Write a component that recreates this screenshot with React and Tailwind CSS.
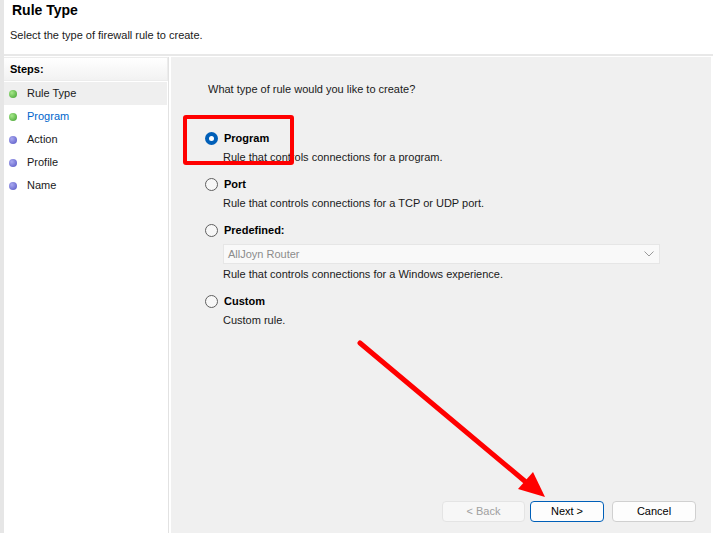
import React from 'react';

const font = { fontFamily: '"Liberation Sans", Arial, sans-serif' };

// wizard steps on the left
const steps = [
  { label: 'Rule Type', done: true, active: true },
  { label: 'Program', done: true, link: true },
  { label: 'Action' },
  { label: 'Profile' },
  { label: 'Name' },
];

function Bullet({ done }) {
  return done ? (
    <span className="w-[8px] h-[8px] rounded-full bg-[radial-gradient(circle_at_35%_35%,#a6e88a,#3e9e2c)]" />
  ) : (
    <span className="w-[8px] h-[8px] rounded-full bg-[radial-gradient(circle_at_35%_35%,#a9a9f0,#5555c4)]" />
  );
}

function Radio({ checked }) {
  if (checked) {
    return (
      <span className="w-[13px] h-[13px] rounded-full bg-[#005fb8] flex items-center justify-center shrink-0">
        <span className="w-[5px] h-[5px] rounded-full bg-white" />
      </span>
    );
  }
  return <span className="w-[13px] h-[13px] rounded-full border border-[#5f5f5f] bg-[#f7f7f7] shrink-0" />;
}

function Option({ checked, label, desc, children }) {
  return (
    <div className="flex flex-col">
      <div className="flex items-center h-[18px] gap-[6px]">
        <Radio checked={checked} />
        <span className="font-bold text-[11px] text-black">{label}</span>
      </div>
      {children}
      <div className="h-[18px] mt-[1px] leading-[18px] text-[11px] text-[#1a1a1a] pl-[18px]">{desc}</div>
    </div>
  );
}

function Button({ children, primary, disabled }) {
  return (
    <button
      className={
        'w-full h-[21px] rounded-[4px] text-[11px] flex items-center justify-center ' +
        (disabled
          ? 'border border-[#e4e4e4] bg-[#f7f7f7] text-[#a0a0a0]'
          : primary
          ? 'border border-[#005fb8] bg-[#fdfdfd] text-black'
          : 'border border-[#d0d0d0] bg-[#fdfdfd] text-black')
      }
    >
      {children}
    </button>
  );
}

export default function App() {
  return (
    <div className="w-[713px] h-[533px] bg-white relative overflow-hidden flex flex-col border-l-[4px] border-l-[#e6e6e6]" style={font}>
      {/* header */}
      <div className="h-[54px] shrink-0 pl-[8px] pt-[1px]">
        <div className="text-[14px] font-bold text-black leading-[18px]">Rule Type</div>
        <div className="text-[11px] text-[#1a1a1a] mt-[8px] ml-[-2px]">Select the type of firewall rule to create.</div>
      </div>
      <div className="h-[2px] bg-[#e8e8e8] shrink-0" />

      <div className="flex flex-1 min-h-0 pt-[1px]">
        {/* steps */}
        <div className="w-[165px] shrink-0 border-r border-r-[#e2e2e2] flex flex-col">
          <div className="h-[24px] flex items-center pl-[6px] text-[11px] font-bold text-black bg-gradient-to-b from-white to-[#f2f2f2] border border-[#ececec] border-l-0">
            Steps:
          </div>
          <div className="flex flex-col pt-[1px]">
            {steps.map((s) => (
              <div
                key={s.label}
                className={'h-[23px] flex items-center gap-[10px] pl-[5px] text-[11px] ' + (s.active ? 'bg-[#efefef] mr-[1px]' : '')}
              >
                <Bullet done={s.done} />
                <span className={s.link ? 'text-[#0066cc]' : 'text-[#1a1a1a]'}>{s.label}</span>
              </div>
            ))}
          </div>
        </div>

        {/* content */}
        <div className="flex-1 ml-[2px] mr-[2px] bg-[#f0f0f0] flex flex-col pl-[34px]">
          <div className="mt-[24px] ml-[3px] h-[16px] leading-[16px] text-[11px] text-[#1a1a1a]">
            What type of rule would you like to create?
          </div>
          <div className="mt-[32px] flex flex-col gap-[9px]">
            <Option checked label="Program" desc="Rule that controls connections for a program." />
            <Option label="Port" desc="Rule that controls connections for a TCP or UDP port." />
            <Option label="Predefined:" desc="Rule that controls connections for a Windows experience.">
              <div className="mt-[5px] ml-[18px] w-[437px] h-[20px] border border-[#e6e6e6] bg-[#f9f9f9] flex items-center justify-between pl-[4px] pr-[5px]">
                <span className="text-[11px] text-[#8c8c8c]">AllJoyn Router</span>
                <svg width="10" height="6" viewBox="0 0 10 6" fill="none">
                  <path d="M0.5 0.5 L5 5 L9.5 0.5" stroke="#9a9a9a" strokeWidth="1" />
                </svg>
              </div>
            </Option>
            <Option label="Custom" desc="Custom rule." />
          </div>

          <div className="flex-1" />
          <div className="flex justify-end items-center pr-[15px] mb-[11px]">
            <div className="w-[83px]"><Button disabled>&lt; Back</Button></div>
            <div className="w-[74px] ml-[5px]"><Button primary>Next &gt;</Button></div>
            <div className="w-[84px] ml-[8px]"><Button>Cancel</Button></div>
          </div>
        </div>
      </div>

      {/* red annotation box */}
      <div className="absolute left-[179px] top-[115px] w-[111px] h-[50px] border-[4px] border-[#ff0000] rounded-[3px]" />

      {/* red annotation arrow */}
      <svg className="absolute left-[-4px] top-0" width="713" height="533" viewBox="0 0 713 533">
        <line x1="360" y1="343" x2="527" y2="483" stroke="#ff0000" strokeWidth="5" strokeLinecap="round" />
        <polygon points="545,497 518,489 533,472" fill="#ff0000" />
      </svg>
    </div>
  );
}
